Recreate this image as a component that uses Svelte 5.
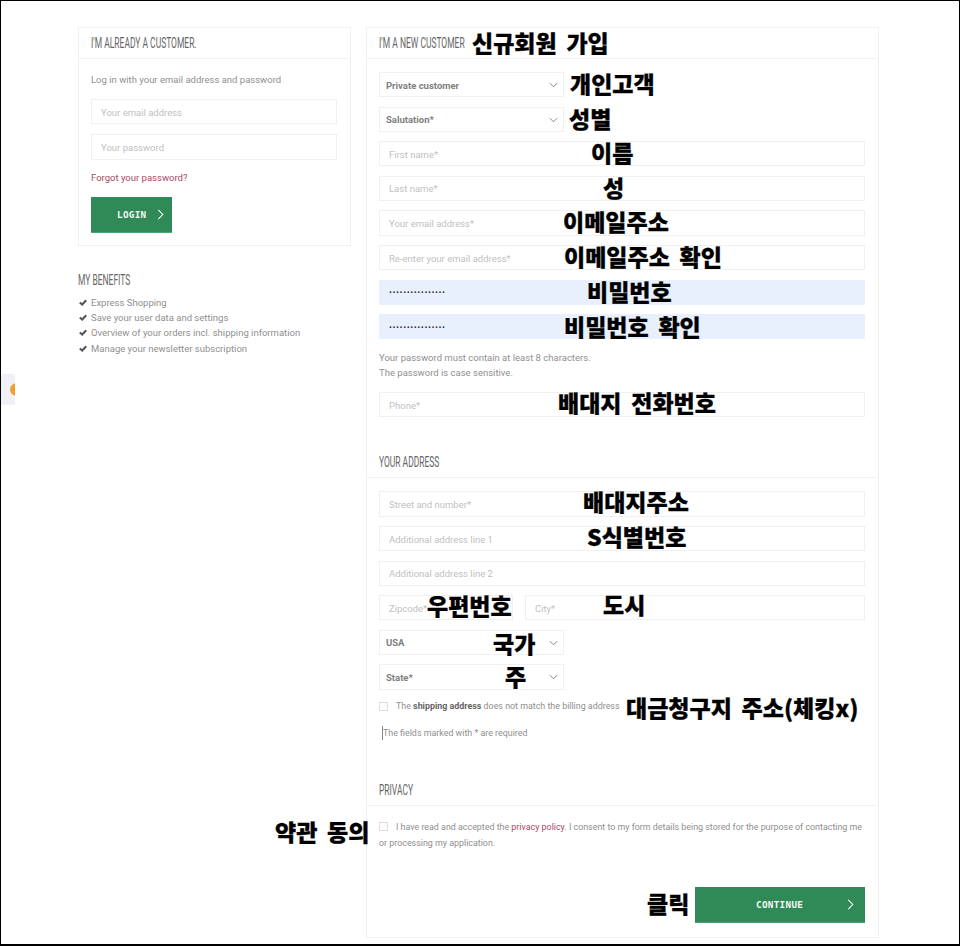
<script>
  const notes = [
    ['신규회원 가입', 471, 41], ['개인고객', 569, 82], ['성별', 568, 117], ['이름', 590, 151], ['성', 602, 186],
    ['이메일주소', 562, 220], ['이메일주소 확인', 563, 255], ['비밀번호', 586, 290], ['비밀번호 확인', 563, 325],
    ['배대지 전화번호', 557, 401], ['배대지주소', 582, 500], ['S식별번호', 586, 535], ['우편번호', 426, 604],
    ['도시', 602, 603], ['국가', 492, 642], ['주', 504, 675], ['대금청구지 주소(체킹x)', 625, 706],
    ['약관 동의', 274, 830], ['클릭', 646, 902]
  ];
  const benefits = ['Express Shopping', 'Save your user data and settings', 'Overview of your orders incl. shipping information', 'Manage your newsletter subscription'];
</script>

{#snippet chevron()}
  <svg class="chev" viewBox="0 0 10 6" width="9" height="6" aria-hidden="true"><path d="M1 1l4 4 4-4" fill="none" stroke="#777" stroke-width="1"/></svg>
{/snippet}
{#snippet arrow()}
  <svg viewBox="0 0 7 12" width="7" height="11" aria-hidden="true"><path d="M1 1l5 5-5 5" fill="none" stroke="#fff" stroke-width="1.1"/></svg>
{/snippet}
{#snippet select(label)}
  <div class="select"><span>{label}</span>{@render chevron()}</div>
{/snippet}

<div class="page">
  <div class="tab"><i></i></div>
  <div class="cols">
    <aside>
      <section class="card login">
        <h2 class="head"><span>I'M ALREADY A CUSTOMER.</span></h2>
        <div class="body">
          <p class="intro">Log in with your email address and password</p>
          <input placeholder="Your email address" />
          <input placeholder="Your password" />
          <a href="#forgot" class="link forgot">Forgot your password?</a>
          <button class="btn small"><b>LOGIN</b>{@render arrow()}</button>
        </div>
      </section>
      <h3 class="benefits-title"><span>MY BENEFITS</span></h3>
      <ul>
        {#each benefits as b}
          <li><svg viewBox="0 0 10 8" width="8" height="7" aria-hidden="true"><path d="M1 4l3 2.6L9 1.2" fill="none" stroke="#555" stroke-width="2.6"/></svg>{b}</li>
        {/each}
      </ul>
    </aside>

    <section class="card reg">
      <h2 class="head"><span>I'M A NEW CUSTOMER</span></h2>
      <div class="fields first">
        {@render select('Private customer')}
        {@render select('Salutation*')}
        <input placeholder="First name*" />
        <input placeholder="Last name*" />
        <input placeholder="Your email address*" />
        <input placeholder="Re-enter your email address*" />
        <input class="filled" value="················" />
        <input class="filled" value="················" />
        <p class="hint">Your password must contain at least 8 characters.<br />The password is case sensitive.</p>
        <input placeholder="Phone*" />
      </div>
      <h2 class="head sub"><span>YOUR ADDRESS</span></h2>
      <div class="fields">
        <input placeholder="Street and number*" />
        <input placeholder="Additional address line 1" />
        <input placeholder="Additional address line 2" />
        <div class="row">
          <input class="zip" placeholder="Zipcode*" />
          <input class="city" placeholder="City*" />
        </div>
        {@render select('USA')}
        {@render select('State*')}
        <label class="check ship narrow"><i class="box"></i><span>The <b>shipping address</b> does not match the billing address</span></label>
        <p class="req narrow"><i class="caret"></i>The fields marked with * are required</p>
      </div>
      <h2 class="head sub privacy"><span>PRIVACY</span></h2>
      <div class="fields">
        <p class="consent narrow"><i class="box"></i>I have read and accepted the <a href="#privacy" class="link">privacy policy</a>. I consent to my form details being stored for the purpose of contacting me or processing my application.</p>
        <div class="actions"><button class="btn wide"><b>CONTINUE</b>{@render arrow()}</button></div>
      </div>
    </section>
  </div>

  {#each notes as [t, x, y]}
    <span class="note" style="left:{x}px;top:{y}px">{t}</span>
  {/each}
</div>

<style>
  :global(body) { margin: 0; background: #fff; }
  .page {
    position: relative; box-sizing: border-box; width: 960px; height: 946px; overflow: hidden;
    border: 1px solid #000; border-bottom-width: 2px; padding: 26px 0 0 77px;
    font: 9.5px/15px Roboto, "Liberation Sans", sans-serif; color: #8f8f8f;
  }
  .tab { position: absolute; left: 0; top: 373px; width: 14px; height: 31px; background: #f0f0f6; overflow: hidden; }
  .tab i { position: absolute; left: 9px; top: 9px; width: 13px; height: 13px; border-radius: 50%; background: #f0a030; }
  .cols { display: flex; gap: 15px; align-items: flex-start; }
  aside { width: 273px; }
  .card { box-sizing: border-box; border: 1px solid #f1f1f1; }
  .head {
    margin: 0; height: 31px; box-sizing: border-box; padding: 0 12px; display: flex; align-items: center;
    border-bottom: 1px solid #f1f1f1; font: 400 14px/1 Roboto, sans-serif; color: #666;
  }
  .head span, .benefits-title span { display: inline-block; white-space: nowrap; transform: scaleX(.605); transform-origin: left center; }
  .login .body { padding: 13px 13px 12px 12px; display: flex; flex-direction: column; }
  .intro { margin: 0 0 12px; }
  .login input { margin-bottom: 10px; padding-top: 2px; }
  .forgot { margin: 0 0 12px; }
  .link { color: #a84a66; text-decoration: none; }
  input, .select {
    box-sizing: border-box; height: 25.3px; width: 100%; border: 1px solid #f0f0f0; background: #fff; padding: 1px 9px 0;
    font: 9.5px Roboto, sans-serif; color: #555; outline: none; flex: none;
  }
  input::placeholder { color: #bfbfbf; opacity: 1; }
  .filled { background: #e8f0fd; border-color: #e8f0fd; font-weight: 700; font-size: 10px; color: #222; letter-spacing: .52px; }
  .select {
    width: 185px; display: flex; align-items: center; justify-content: space-between; padding: 1px 5px 0 6px;
    font-weight: 700; color: #808080;
  }
  .btn {
    display: flex; align-items: center; border: 0; border-bottom: 1px solid #4aa371; background: #2f8a57; color: #f4f8f5; padding: 0;
    font: 700 9.3px "DejaVu Sans Mono", monospace; letter-spacing: .3px;
  }
  .btn b { font-weight: 700; }
  .small { width: 81px; height: 36px; padding-left: 26px; gap: 10px; }
  .wide { width: 170px; height: 36px; padding-left: 61px; gap: 44px; }
  .benefits-title { margin: 27px 0 7px; font: 400 14px/15px Roboto, sans-serif; color: #666; }
  ul { list-style: none; margin: 0; padding: 0; }
  li { display: flex; align-items: center; gap: 4px; height: 15.3px; padding-left: 1px; }
  .reg { width: 513px; height: 911px; }
  .fields { padding: 13px 13px 0 12px; display: flex; flex-direction: column; gap: 9.3px; }
  .hint { margin: 0; padding: 1px 0 3px; }
  .head.sub { height: 32px; margin-top: 29px; }
  .row { display: flex; gap: 12px; }
  .zip { width: 134px; }
  .city { flex: 1; width: auto; }
  .narrow { font-size: 8.9px; }
  .box { display: inline-block; box-sizing: border-box; width: 9px; height: 9px; border: 1px solid #dedede; flex: none; }
  .check { display: flex; align-items: center; gap: 8px; height: 15px; }
  .check b { color: #666; }
  .req { margin: 3px 0 0 4px; position: relative; }
  .caret { position: absolute; left: -1px; top: 0; height: 14px; border-left: 1px solid #888; }
  .head.privacy { margin-top: 33px; }
  .consent { margin: 0; line-height: 16px; }
  .consent .box { margin-right: 8px; vertical-align: -1px; }
  .actions { display: flex; justify-content: flex-end; margin-top: 26px; }
  .note {
    position: absolute; transform: translateY(-50%); white-space: nowrap;
    font: 900 23px/1 "Noto Sans CJK KR", sans-serif; color: #000; word-spacing: 4.5px;
    -webkit-text-stroke: .3px #000;
  }
</style>
